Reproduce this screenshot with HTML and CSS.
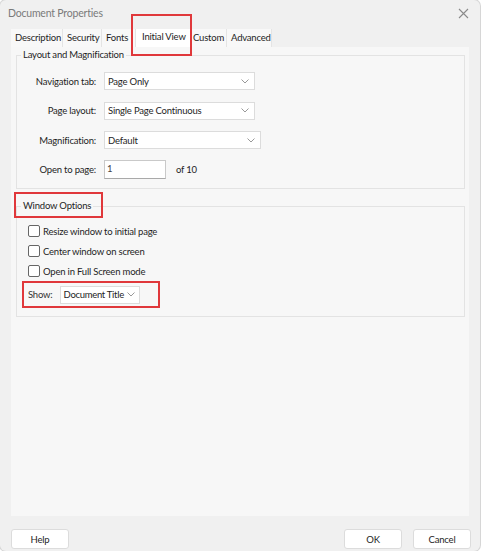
FILE: index.html
```html
<!DOCTYPE html>
<html>
<head>
<meta charset="utf-8">
<link rel="stylesheet" href="styles.css">
</head>
<body>
<div class="dialog">
  <div class="titlebar">
    <span class="title">Document Properties</span>
    <svg class="close" width="11" height="11" viewBox="0 0 11 11"><path d="M1 1L10 10M10 1L1 10" stroke="#8a8a8a" stroke-width="1.1" fill="none"/></svg>
  </div>
  <div class="tabs">
    <div class="tab t-desc">Description</div>
    <div class="tab t-sec">Security</div>
    <div class="tab t-fonts">Fonts</div>
    <div class="tab t-init active">Initial View</div>
    <div class="tab t-cust">Custom</div>
    <div class="tab t-adv">Advanced</div>
  </div>
  <div class="panel">
    <fieldset class="group g1">
      <legend>Layout and Magnification</legend>
      <div class="row r1">
        <span class="label">Navigation tab:</span>
        <div class="select w151"><span>Page Only</span><svg width="8" height="5" viewBox="0 0 8 5"><path d="M0.5 0.5L4 4L7.5 0.5" stroke="#999" fill="none"/></svg></div>
      </div>
      <div class="row">
        <span class="label">Page layout:</span>
        <div class="select w151"><span>Single Page Continuous</span><svg width="8" height="5" viewBox="0 0 8 5"><path d="M0.5 0.5L4 4L7.5 0.5" stroke="#999" fill="none"/></svg></div>
      </div>
      <div class="row">
        <span class="label">Magnification:</span>
        <div class="select w157"><span>Default</span><svg width="8" height="5" viewBox="0 0 8 5"><path d="M0.5 0.5L4 4L7.5 0.5" stroke="#999" fill="none"/></svg></div>
      </div>
      <div class="row">
        <span class="label">Open to page:</span>
        <div class="input">1</div>
        <span class="of">of 10</span>
      </div>
    </fieldset>
    <fieldset class="group g2">
      <legend><span class="hl">Window Options</span></legend>
      <label class="check"><span class="box"></span>Resize window to initial page</label>
      <label class="check"><span class="box"></span>Center window on screen</label>
      <label class="check"><span class="box"></span>Open in Full Screen mode</label>
      <div class="showrow">
        <span class="showlbl">Show:</span>
        <div class="select w80 tight"><span>Document Title</span><svg width="8" height="5" viewBox="0 0 8 5"><path d="M0.5 0.5L4 4L7.5 0.5" stroke="#999" fill="none"/></svg></div>
      </div>
    </fieldset>
  </div>
  <div class="footer">
    <button class="btn">Help</button>
    <span class="spacer"></span>
    <button class="btn">OK</button>
    <button class="btn">Cancel</button>
  </div>
</div>
</body>
</html>
```
FILE: styles.css
```css
html, body {
  margin: 0;
  padding: 0;
  background: #ffffff;
}
body {
  font-family: Lato, "Open Sans", "Liberation Sans", sans-serif;
  font-size: 9.5px;
  letter-spacing: -0.2px;
  color: #1e1e1e;
}
.dialog {
  width: 480px;
  height: 551px;
  background: #f0f0f0;
  border-radius: 6px;
  box-shadow: 0 0 0 1px #d6d6d6;
  display: flex;
  flex-direction: column;
  box-sizing: border-box;
}
.titlebar {
  height: 29px;
  display: flex;
  align-items: flex-start;
  padding: 5px 11px 0 8px;
  box-sizing: border-box;
}
.title {
  font-size: 10.5px;
  letter-spacing: -0.2px;
  line-height: 16px;
  color: #7a7a7a;
  flex: 1;
}
.close {
  margin-top: 3px;
}
.tabs {
  display: flex;
  height: 18px;
  margin-left: 11px;
}
.tab {
  height: 18px;
  line-height: 18px;
  padding: 0 0 0 4px;
  box-sizing: border-box;
  background: #f8f8f8;
  border-right: 1px solid #e4e4e4;
  white-space: nowrap;
}
.t-desc { width: 52px; }
.t-sec { width: 39px; }
.t-fonts { width: 34px; }
.t-init { width: 56px; }
.t-cust { width: 35px; padding-left: 1px; }
.t-adv { width: 45px; }
.tab.active {
  position: relative;
  background: #ffffff;
  padding-left: 6px;
  line-height: 15px;
}
.tab.active::after {
  content: "";
  position: absolute;
  left: -5px;
  top: -15px;
  right: -1px;
  bottom: -9px;
  border: 2px solid #e0383b;
}
.panel {
  flex: 1;
  margin: 0 11px;
  background: #f7f7f7;
  padding: 1px 4px 0 5px;
  display: flex;
  flex-direction: column;
}
.group {
  margin: 0;
  border: 1px solid #e3e3e3;
  padding: 0;
}
.group legend {
  margin-left: 4px;
  padding: 0 2px;
  line-height: 14px;
}
.g1 {
  height: 141px;
  padding-top: 10px;
  box-sizing: border-box;
}
.row {
  display: flex;
  align-items: center;
  height: 18px;
  margin-bottom: 11.5px;
}
.row .label {
  width: 79px;
  text-align: right;
  margin-right: 8px;
  white-space: nowrap;
}
.select {
  height: 18px;
  background: #ffffff;
  border: 1px solid #dcdcdc;
  box-sizing: border-box;
  display: flex;
  align-items: center;
  padding: 0 5px 0 3px;
}
.select span {
  flex: 1;
  white-space: nowrap;
}
.select.tight {
  padding: 0 4px 0 3px;
  letter-spacing: -0.3px;
}
.w151 { width: 151px; }
.w157 { width: 157px; }
.w80 { width: 80px; }
.input {
  width: 62px;
  height: 19px;
  background: #ffffff;
  border: 1px solid #c9c9c9;
  border-bottom-color: #a9a9a9;
  box-sizing: border-box;
  padding-left: 2px;
  line-height: 15px;
  color: #444;
}
.of {
  margin-left: 10px;
}
.g2 {
  margin-top: 10px;
  height: 118px;
  box-sizing: border-box;
  padding-top: 8px;
}
.g2 legend {
  margin-left: 4px;
}
.hl {
  position: relative;
  display: inline-block;
}
.hl::before {
  content: "";
  position: absolute;
  left: -9px;
  right: -12px;
  top: -7px;
  bottom: -5px;
  border: 2px solid #e0383b;
}
.check {
  display: flex;
  align-items: center;
  height: 20px;
  padding-left: 11px;
}
.box {
  width: 10px;
  height: 10px;
  border: 1px solid #666;
  border-radius: 2px;
  background: #fff;
  margin-right: 3px;
}
.showrow {
  margin: 0 0 0 5px;
  width: 138px;
  height: 27px;
  box-sizing: border-box;
  border: 2px solid #e0383b;
  display: flex;
  align-items: center;
  padding-left: 4px;
}
.showlbl {
  margin-right: 7px;
  color: #333;
}
.footer {
  height: 35px;
  display: flex;
  align-items: flex-start;
  padding: 13px 9px 0 11px;
  box-sizing: border-box;
}
.spacer {
  flex: 1;
}
.btn {
  width: 58px;
  height: 20px;
  background: #ffffff;
  border: 1px solid #dcdcdc;
  border-radius: 3px;
  font-family: inherit;
  font-size: 9.5px;
  letter-spacing: -0.2px;
  color: #1e1e1e;
  padding: 0;
  margin-left: 11px;
}
.btn:first-child {
  margin-left: 0;
}
```
